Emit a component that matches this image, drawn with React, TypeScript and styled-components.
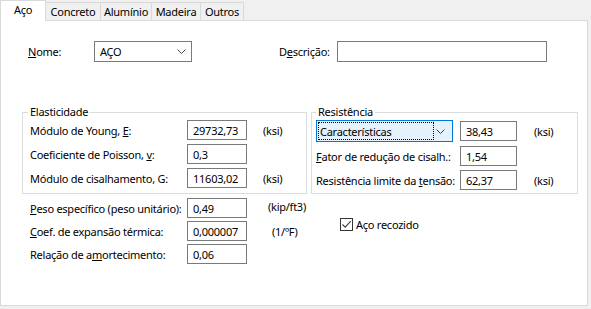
import React from 'react'
import styled, { createGlobalStyle } from 'styled-components'

const GlobalStyle = createGlobalStyle`
  html, body {
    margin: 0;
    padding: 0;
    background: #f0f0f0;
  }
  body {
    font-family: "Noto Sans", "Segoe UI", sans-serif;
    font-size: 11px;
    letter-spacing: -0.25px;
    color: #000;
  }
  * { box-sizing: border-box; }
`

const Chevron = () => (
  <svg width="9" height="5" viewBox="0 0 9 5">
    <path d="M0.5 0.5 L4.5 4.5 L8.5 0.5" fill="none" stroke="#444" strokeWidth="1" />
  </svg>
)

const App = () => {
  return (
    <Window>
      <GlobalStyle />
      <TabStrip>
        <Tab $active $w={46}>Aço</Tab>
        <Tab $w={55}>Concreto</Tab>
        <Tab $w={51}>Alumínio</Tab>
        <Tab $w={49}>Madeira</Tab>
        <Tab $w={43}>Outros</Tab>
      </TabStrip>
      <Panel>
        <HeaderRow>
          <HeaderLabel $w={66}><u>N</u>ome:</HeaderLabel>
          <Select $w={98}>
            <span>AÇO</span>
            <Chevron />
          </Select>
          <HeaderLabel $w={58} $ml={87}>D<u>e</u>scrição:</HeaderLabel>
          <TextBox $w={210} />
        </HeaderRow>

        <GroupsRow>
          <Group $w={285} $pl={7}>
            <Legend $shift={-2}>Elasticidade</Legend>
            <FieldGrid $label={157} $input={60}>
              <Label>Módulo de Young, <u>E</u>:</Label>
              <Field>29732,73</Field>
              <Unit>(ksi)</Unit>
              <Label>Coeficiente de Poisson, <u>v</u>:</Label>
              <Field>0,3</Field>
              <Unit />
              <Label>Módulo de cisalhamento, G:</Label>
              <Field>11603,02</Field>
              <Unit>(ksi)</Unit>
            </FieldGrid>
          </Group>
          <Group $w={267} $pl={4}>
            <Legend $shift={0}>Resistência</Legend>
            <FieldGrid $label={144} $input={57}>
              <Combo>
                <ComboText>Características</ComboText>
                <Chevron />
              </Combo>
              <Field>38,43</Field>
              <Unit $indent={17}>(ksi)</Unit>
              <Label><u>F</u>ator de redução de cisalh.:</Label>
              <Field>1,54</Field>
              <Unit />
              <Label>Resistência limite da <u>t</u>ensão:</Label>
              <Field>62,37</Field>
              <Unit $indent={17}>(ksi)</Unit>
            </FieldGrid>
          </Group>
        </GroupsRow>

        <BottomArea>
          <FieldGrid $label={157} $input={60} $gap={3}>
            <Label><u>P</u>eso específico (peso unitário):</Label>
            <Field>0,49</Field>
            <Unit $indent={21} $raise={3}>(kip/ft3)</Unit>
            <Label><u>C</u>oef. de expansão térmica:</Label>
            <Field>0,000007</Field>
            <Unit $indent={25}>(1/ºF)</Unit>
            <Label>Relação de a<u>m</u>ortecimento:</Label>
            <Field>0,06</Field>
            <Unit />
          </FieldGrid>
          <CheckRow>
            <CheckBox>
              <svg width="11" height="11" viewBox="0 0 11 11">
                <path d="M1.5 5.5 L4.2 8.2 L9.8 2.2" fill="none" stroke="#444" strokeWidth="1.2" />
              </svg>
            </CheckBox>
            <span>Aço recozido</span>
          </CheckRow>
        </BottomArea>
      </Panel>
    </Window>
  )
}

export default App

const Window = styled.div`
  width: 591px;
  height: 309px;
  overflow: hidden;
  background: #f0f0f0;
`

const TabStrip = styled.div`
  display: flex;
  align-items: flex-end;
  height: 20px;
`

const Tab = styled.div<{ $active?: boolean; $w: number }>`
  position: relative;
  z-index: ${p => (p.$active ? 1 : 0)};
  width: ${p => p.$w}px;
  height: ${p => (p.$active ? 21 : 18)}px;
  margin-bottom: ${p => (p.$active ? -1 : 0)}px;
  display: flex;
  align-items: center;
  justify-content: center;
  padding-bottom: ${p => (p.$active ? 3 : 0)}px;
  background: ${p => (p.$active ? '#fff' : '#f0f0f0')};
  border-top: 1px solid #d9d9d9;
  border-right: 1px solid #d9d9d9;
  border-left: ${p => (p.$active ? '1px solid #d9d9d9' : 'none')};
  white-space: nowrap;
`

const Panel = styled.div`
  width: 588px;
  height: 286px;
  background: #fff;
  border: 1px solid #d9d9d9;
  padding: 20px 0 0 21px;
`

const HeaderRow = styled.div`
  display: flex;
  align-items: center;
  height: 20px;
`

const HeaderLabel = styled.div<{ $w: number; $ml?: number }>`
  width: ${p => p.$w}px;
  margin-left: ${p => p.$ml ?? 6}px;
  white-space: nowrap;
`

const Select = styled.div<{ $w: number }>`
  width: ${p => p.$w}px;
  height: 21px;
  border: 1px solid #7a7a7a;
  display: flex;
  align-items: center;
  justify-content: space-between;
  padding: 0 5px 0 5px;
`

const TextBox = styled.div<{ $w: number }>`
  width: ${p => p.$w}px;
  height: 21px;
  border: 1px solid #7a7a7a;
`

const GroupsRow = styled.div`
  display: flex;
  gap: 4px;
  margin-top: 44px;
`

const Group = styled.fieldset<{ $w: number; $pl: number }>`
  width: ${p => p.$w}px;
  margin: 0;
  border: 1px solid #dcdcdc;
  padding: 0 4px 3px ${p => p.$pl}px;
`

const Legend = styled.legend<{ $shift: number }>`
  padding: 0 2px;
  margin-left: ${p => p.$shift}px;
  line-height: 14px;
  margin-bottom: 1px;
`

const FieldGrid = styled.div<{ $label: number; $input: number; $gap?: number }>`
  display: grid;
  grid-template-columns: ${p => p.$label}px ${p => p.$input}px auto;
  row-gap: ${p => p.$gap ?? 4}px;
  align-items: center;
`

const Label = styled.div`
  white-space: nowrap;
`

const Field = styled.div`
  height: 20px;
  border: 1px solid #7a7a7a;
  padding-left: 5px;
  display: flex;
  align-items: center;
  white-space: nowrap;
`

const Unit = styled.div<{ $indent?: number; $raise?: number }>`
  padding-left: ${p => p.$indent ?? 16}px;
  margin-top: ${p => -(p.$raise ?? 0)}px;
  white-space: nowrap;
`

const Combo = styled.div`
  width: 137px;
  height: 22px;
  border: 1px solid #0078d7;
  background: #e5f1fb;
  display: flex;
  align-items: center;
  justify-content: space-between;
  padding: 1px 7px 1px 1px;
`

const ComboText = styled.div`
  width: 116px;
  height: 18px;
  border: 1px dotted #000;
  display: flex;
  align-items: center;
  padding-left: 1px;
`

const BottomArea = styled.div`
  display: grid;
  grid-template-columns: 310px auto;
  align-items: start;
  margin-top: 4px;
  padding-left: 8px;
`

const CheckRow = styled.div`
  display: flex;
  align-items: center;
  gap: 3px;
  margin-top: 19px;
`

const CheckBox = styled.div`
  width: 13px;
  height: 13px;
  border: 1px solid #333;
  display: flex;
  align-items: center;
  justify-content: center;
`
